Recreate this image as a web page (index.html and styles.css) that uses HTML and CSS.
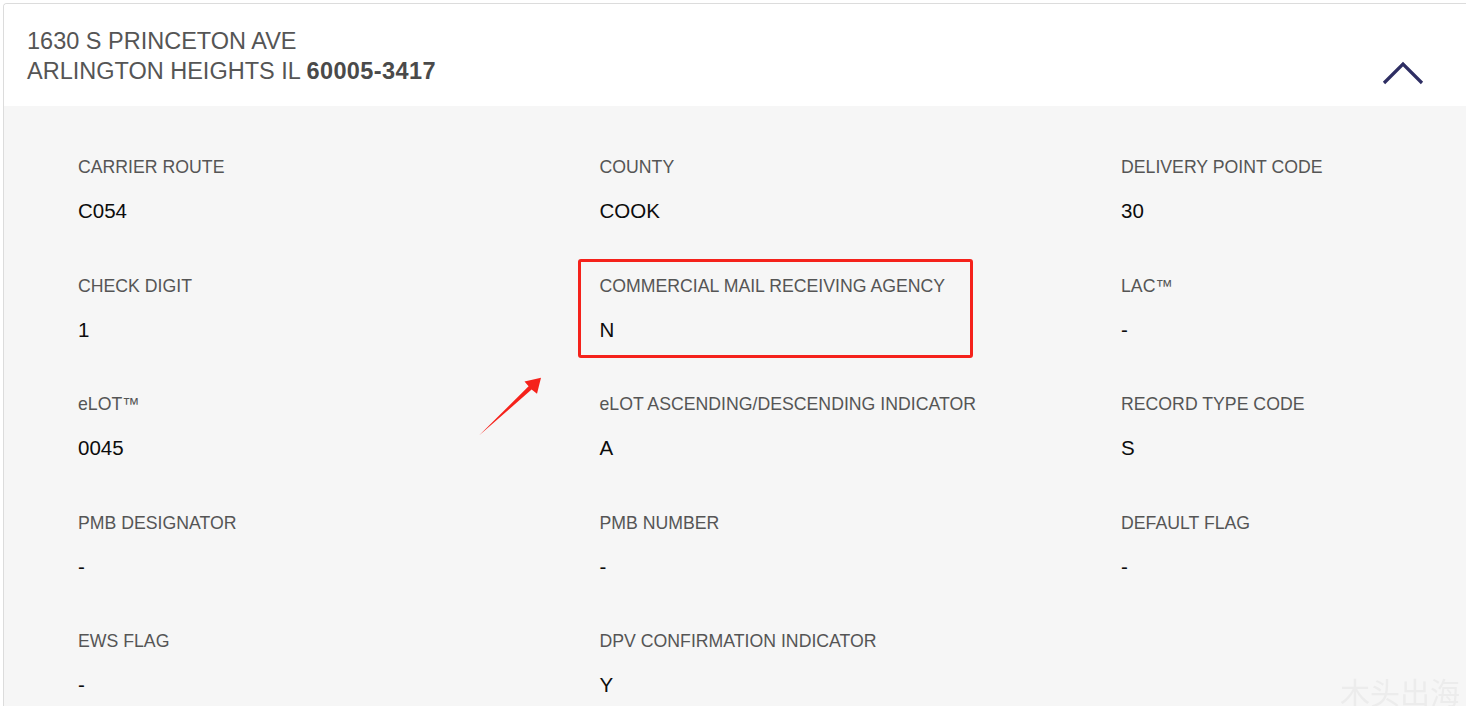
FILE: index.html
```html
<!DOCTYPE html>
<html lang="en">
<head>
<meta charset="utf-8">
<title>Address details</title>
<link rel="stylesheet" href="styles.css">
</head>
<body>
<section class="card">
  <header class="card-head">
    <div class="address">
      <div class="line">1630 S PRINCETON AVE</div>
      <div class="line">ARLINGTON HEIGHTS IL <strong class="zip">60005-3417</strong></div>
    </div>
    <svg class="chevron" width="42" height="26" viewBox="0 0 42 26" aria-hidden="true">
      <polyline points="2,23 21,4 40,23" fill="none" stroke="#2e2e63" stroke-width="3.2"/>
    </svg>
  </header>
  <div class="card-body">
    <div class="grid">
      <div class="item"><div class="label">CARRIER ROUTE</div><div class="value">C054</div></div>
      <div class="item"><div class="label">COUNTY</div><div class="value">COOK</div></div>
      <div class="item"><div class="label">DELIVERY POINT CODE</div><div class="value">30</div></div>

      <div class="item"><div class="label">CHECK DIGIT</div><div class="value">1</div></div>
      <div class="item marked">
        <div class="label">COMMERCIAL MAIL RECEIVING AGENCY</div><div class="value">N</div>
        <div class="highlight"></div>
        <svg class="arrow" width="72" height="72" viewBox="0 0 72 72" aria-hidden="true">
          <polygon points="5,64.5 54.6,15.2 50.5,10.5 67,6.8 63,22.8 57.6,18.6" fill="#f5221b"/>
        </svg>
      </div>
      <div class="item"><div class="label">LAC™</div><div class="value">-</div></div>

      <div class="item"><div class="label">eLOT™</div><div class="value">0045</div></div>
      <div class="item"><div class="label">eLOT ASCENDING/DESCENDING INDICATOR</div><div class="value">A</div></div>
      <div class="item"><div class="label">RECORD TYPE CODE</div><div class="value">S</div></div>

      <div class="item"><div class="label">PMB DESIGNATOR</div><div class="value">-</div></div>
      <div class="item"><div class="label">PMB NUMBER</div><div class="value">-</div></div>
      <div class="item"><div class="label">DEFAULT FLAG</div><div class="value">-</div></div>

      <div class="item"><div class="label">EWS FLAG</div><div class="value">-</div></div>
      <div class="item"><div class="label">DPV CONFIRMATION INDICATOR</div><div class="value">Y</div></div>
    </div>
  </div>
</section>
<div class="watermark">木头出海</div>
</body>
</html>
```

FILE: styles.css
```css
html, body {
  margin: 0;
  padding: 0;
  background: #ffffff;
  overflow: hidden;
}

body {
  font-family: "Liberation Sans", Arial, "Noto Sans CJK SC", sans-serif;
  color: #111;
}

.card {
  margin: 3px 0 0 3px;
  width: 1463px;
  border-top: 1px solid #dcdcdc;
  border-left: 1px solid #dcdcdc;
  border-top-left-radius: 4px;
  overflow: hidden;
}

.card-head {
  display: flex;
  justify-content: space-between;
  align-items: flex-start;
  height: 102px;
  box-sizing: border-box;
  padding: 23px 43px 0 23px;
  background: #ffffff;
}

.address {
  font-size: 23.5px;
  line-height: 29.5px;
  color: #555555;
}

.zip {
  font-weight: bold;
  color: #4a4a4a;
  letter-spacing: 0.4px;
}

.chevron {
  display: block;
  margin-top: 33px;
}

.card-body {
  background: #f6f6f6;
  padding: 51px 0 40px 74px;
}

.grid {
  display: grid;
  grid-template-columns: 521.5px 521.5px 1fr;
  row-gap: 52.5px;
}

.item {
  position: relative;
  height: 66px;
}

.label {
  font-size: 17.7px;
  line-height: 20px;
  color: #555555;
}

.value {
  margin-top: 22px;
  font-size: 20.5px;
  line-height: 24px;
  color: #0c0c0c;
}

.highlight {
  position: absolute;
  left: -22px;
  top: -16.5px;
  width: 395px;
  height: 99px;
  box-sizing: border-box;
  border: 3px solid #f5221b;
  border-radius: 3px;
}

.arrow {
  position: absolute;
  left: -126px;
  top: 95px;
}

.watermark {
  position: fixed;
  right: 6px;
  bottom: -3px;
  font-family: "Noto Sans CJK SC", sans-serif;
  font-size: 30px;
  line-height: 36px;
  color: #ececec;
}
```
